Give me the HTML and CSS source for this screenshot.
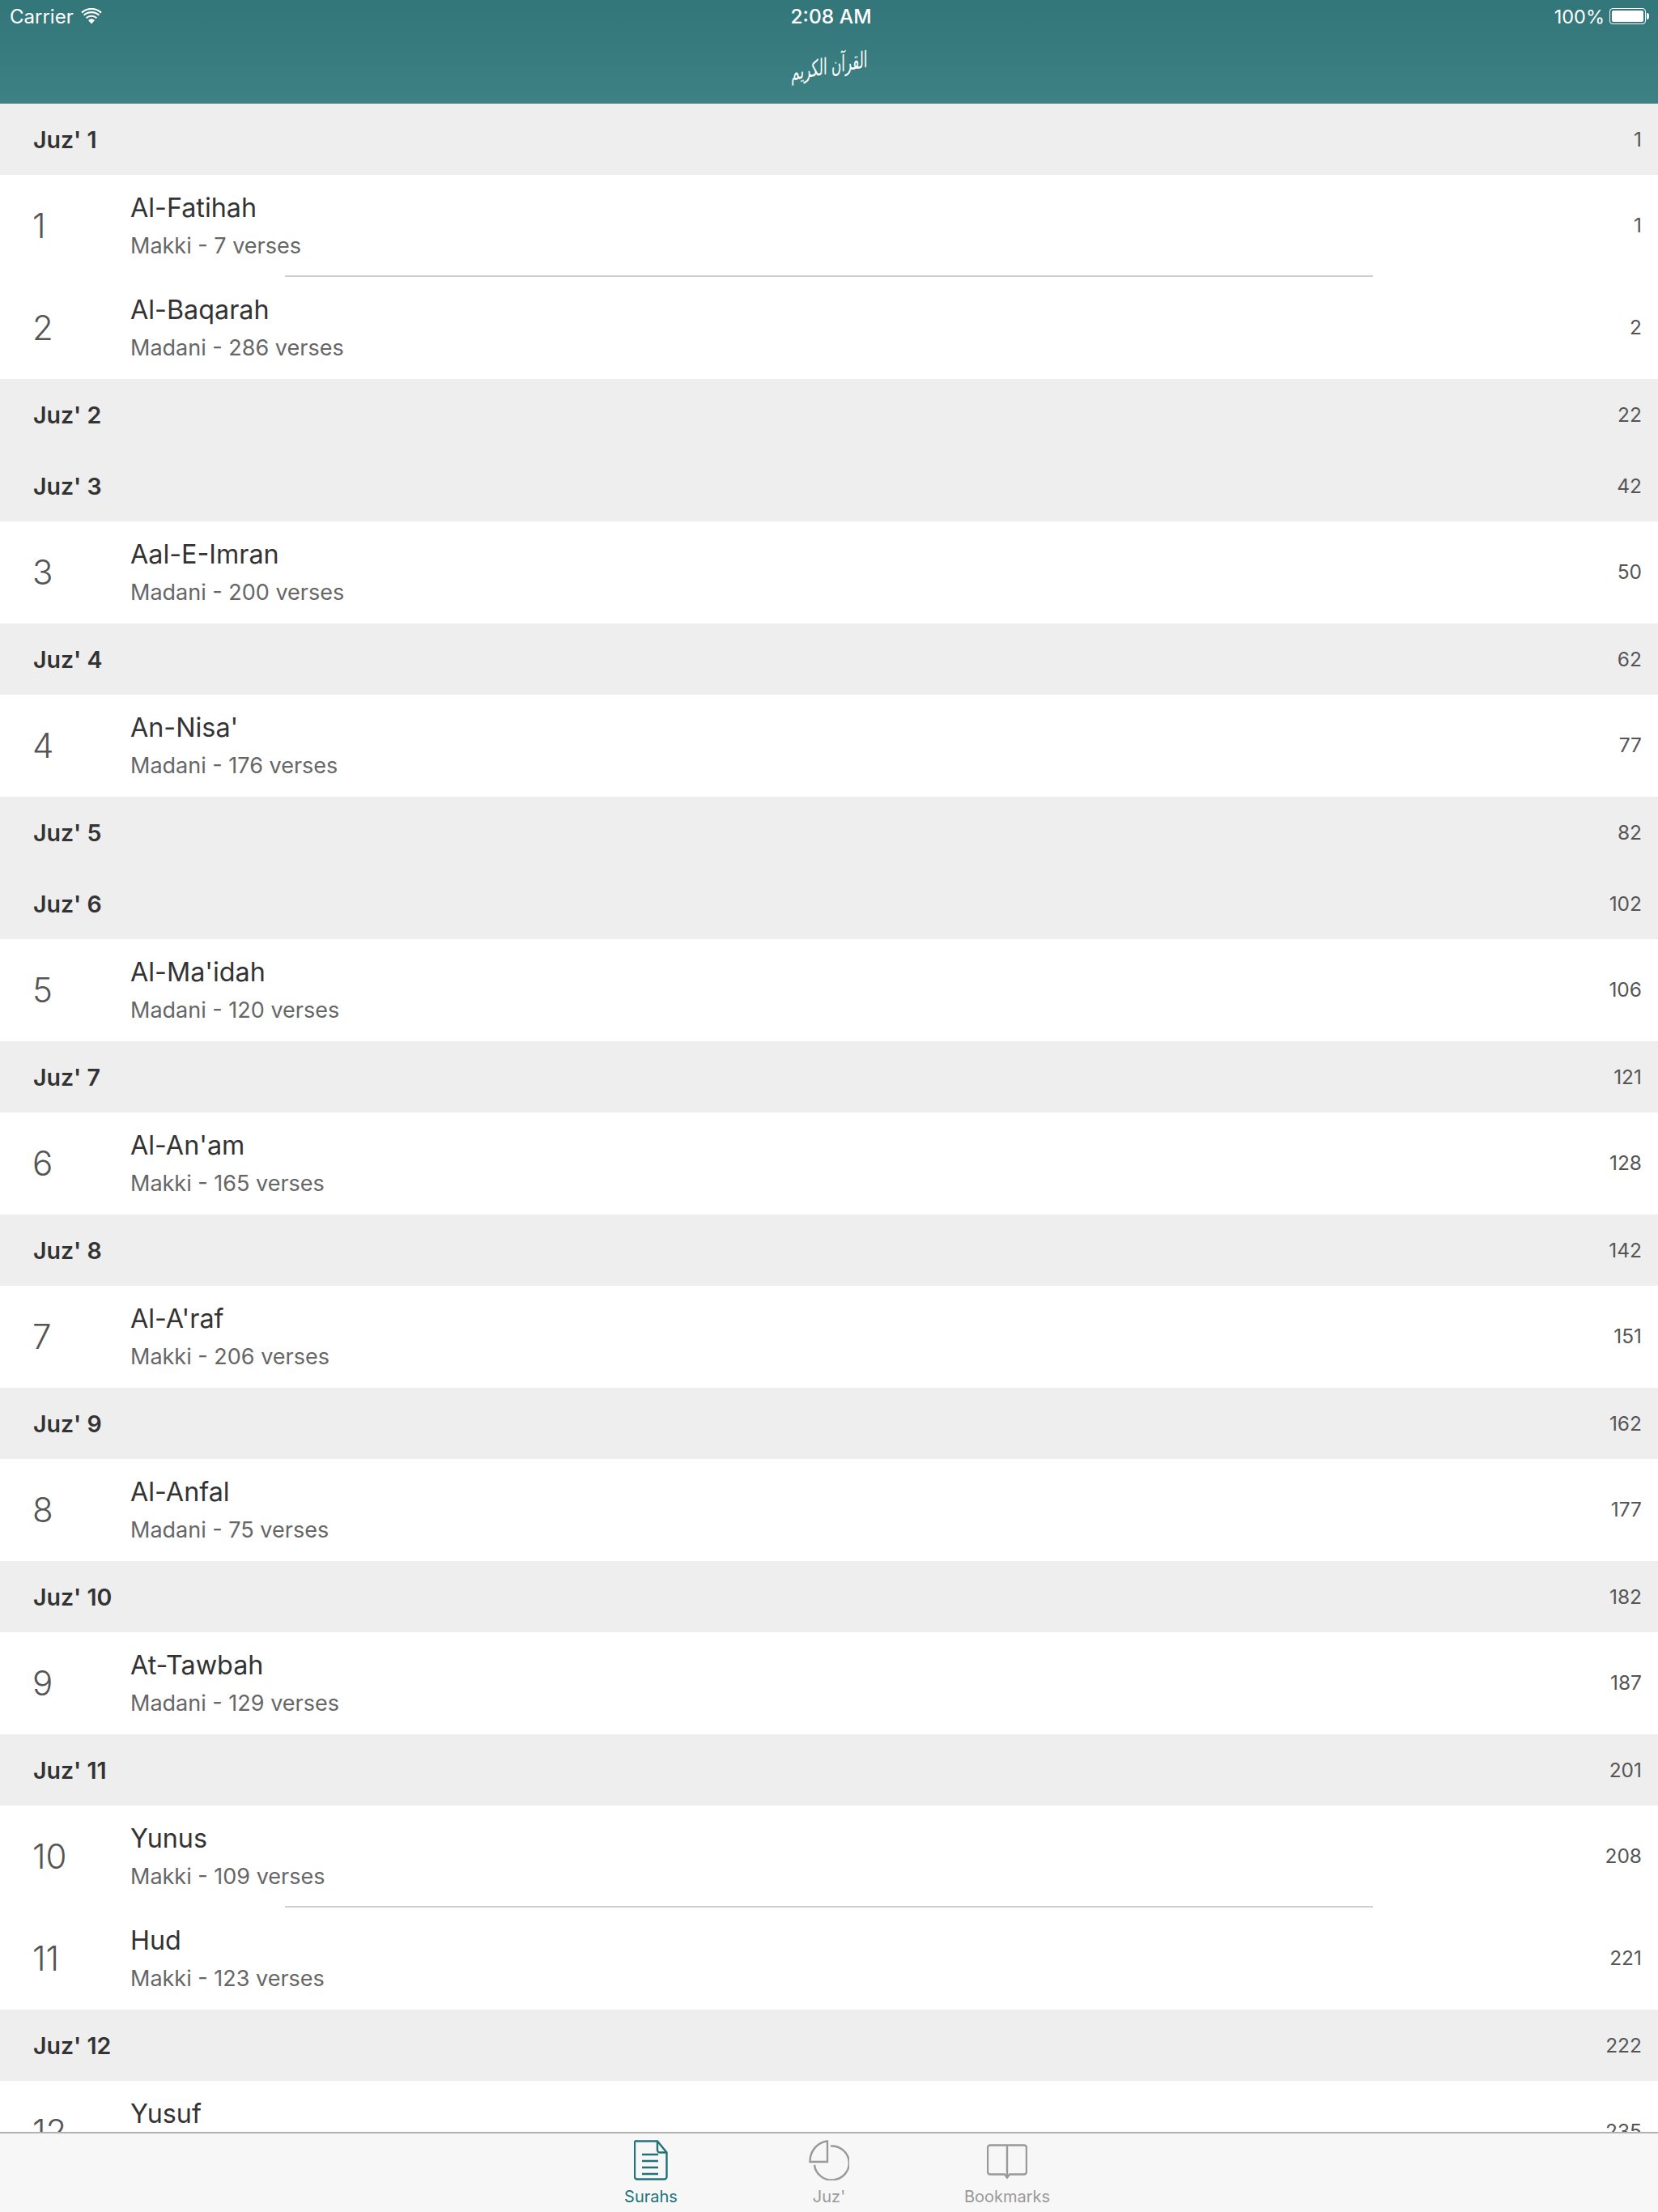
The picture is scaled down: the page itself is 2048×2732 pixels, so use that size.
FILE: index.html
```html
<!DOCTYPE html>
<html lang="en">
<head>
    <meta charset="UTF-8">
    <meta name="viewport" content="width=device-width, initial-scale=1.0">
    <title>Quran</title>
    <link rel="stylesheet" href="styles.css">
</head>
<body>
    <header class="nav">
        <div class="status">
            <div class="status-left">
                <span>Carrier</span>
                <svg class="wifi" viewBox="0 0 26 20" width="26" height="20">
                    <path d="M13 19.5l-4-4.6a6 6 0 0 1 8 0z" fill="#fff"/>
                    <path d="M6.6 12.2a9.6 9.6 0 0 1 12.8 0M3.6 8.7a14.2 14.2 0 0 1 18.8 0M1 5.6a18 18 0 0 1 24 0" fill="none" stroke="#fff" stroke-width="2.2"/>
                </svg>
            </div>
            <div class="status-time">2:08 AM</div>
            <div class="status-right">
                <span>100%</span>
                <div class="battery"><div class="battery-fill"></div></div>
                <div class="battery-nub"></div>
            </div>
        </div>
        <div class="nav-title" lang="ar" dir="rtl"><span>القرآن الكريم</span></div>
    </header>

    <main class="list">
        <div class="section"><b>Juz' 1</b><span>1</span></div>
        <div class="row"><div class="num">1</div><div class="info"><div class="name">Al-Fatihah</div><div class="sub">Makki - 7 verses</div></div><span class="page">1</span></div>
        <div class="row"><div class="num">2</div><div class="info"><div class="name">Al-Baqarah</div><div class="sub">Madani - 286 verses</div></div><span class="page">2</span></div>
        <div class="section"><b>Juz' 2</b><span>22</span></div>
        <div class="section"><b>Juz' 3</b><span>42</span></div>
        <div class="row"><div class="num">3</div><div class="info"><div class="name">Aal-E-Imran</div><div class="sub">Madani - 200 verses</div></div><span class="page">50</span></div>
        <div class="section"><b>Juz' 4</b><span>62</span></div>
        <div class="row"><div class="num">4</div><div class="info"><div class="name">An-Nisa'</div><div class="sub">Madani - 176 verses</div></div><span class="page">77</span></div>
        <div class="section"><b>Juz' 5</b><span>82</span></div>
        <div class="section"><b>Juz' 6</b><span>102</span></div>
        <div class="row"><div class="num">5</div><div class="info"><div class="name">Al-Ma'idah</div><div class="sub">Madani - 120 verses</div></div><span class="page">106</span></div>
        <div class="section"><b>Juz' 7</b><span>121</span></div>
        <div class="row"><div class="num">6</div><div class="info"><div class="name">Al-An'am</div><div class="sub">Makki - 165 verses</div></div><span class="page">128</span></div>
        <div class="section"><b>Juz' 8</b><span>142</span></div>
        <div class="row"><div class="num">7</div><div class="info"><div class="name">Al-A'raf</div><div class="sub">Makki - 206 verses</div></div><span class="page">151</span></div>
        <div class="section"><b>Juz' 9</b><span>162</span></div>
        <div class="row"><div class="num">8</div><div class="info"><div class="name">Al-Anfal</div><div class="sub">Madani - 75 verses</div></div><span class="page">177</span></div>
        <div class="section"><b>Juz' 10</b><span>182</span></div>
        <div class="row"><div class="num">9</div><div class="info"><div class="name">At-Tawbah</div><div class="sub">Madani - 129 verses</div></div><span class="page">187</span></div>
        <div class="section"><b>Juz' 11</b><span>201</span></div>
        <div class="row"><div class="num">10</div><div class="info"><div class="name">Yunus</div><div class="sub">Makki - 109 verses</div></div><span class="page">208</span></div>
        <div class="row"><div class="num">11</div><div class="info"><div class="name">Hud</div><div class="sub">Makki - 123 verses</div></div><span class="page">221</span></div>
        <div class="section"><b>Juz' 12</b><span>222</span></div>
        <div class="row"><div class="num">12</div><div class="info"><div class="name">Yusuf</div><div class="sub">Makki - 111 verses</div></div><span class="page">235</span></div>
    </main>

    <footer class="tabs">
        <div class="tab active">
            <svg viewBox="0 0 42 50" width="42" height="50" fill="none" stroke="#22727a" stroke-width="2.4">
                <path d="M4 1.500h25l11.500 14v30a3 3 0 0 1-3 3H4a3 3 0 0 1-3-3v-42a2 2 0 0 1 3-2z"/>
                <path d="M29 1.500v11a3 3 0 0 0 3 3h8.500"/>
                <path d="M10 18h20M10 26h20M10 34h20M10 42h20"/>
            </svg>
            <span>Surahs</span>
        </div>
        <div class="tab">
            <svg viewBox="0 0 50 50" width="50" height="50" fill="none" stroke="#999" stroke-width="2.4">
                <path d="M23 1.500V27H1.500A24 25 0 0 1 23 1.500z"/>
                <path d="M27 7.500A21.500 21 0 1 1 7 31"/>
            </svg>
            <span>Juz'</span>
        </div>
        <div class="tab">
            <svg viewBox="0 0 50 50" width="50" height="50" fill="none" stroke="#999" stroke-width="2.4">
                <path d="M25 6.500H4a3 3 0 0 0-3 3v30a3 3 0 0 0 3 3h18l3 4 3-4h18a3 3 0 0 0 3-3v-30a3 3 0 0 0-3-3z"/>
                <path d="M25 6.500V46"/>
            </svg>
            <span>Bookmarks</span>
        </div>
    </footer>
</body>
</html>
```

FILE: styles.css
```css
* {
    box-sizing: border-box;
}
body {
    margin: 0;
    height: 2732px;
    overflow: hidden;
    display: flex;
    flex-direction: column;
    font-family: 'Inter', 'Liberation Sans', sans-serif;
    color: #333;
    background-color: white;
}
.nav {
    height: 128px;
    flex: none;
    color: white;
    background: linear-gradient(#33767a, #3d8185);
}
.status {
    height: 40px;
    padding: 0 11px 0 12px;
    display: flex;
    align-items: center;
    justify-content: space-between;
    font-size: 24px;
}
.status-left, .status-right {
    width: 300px;
    display: flex;
    align-items: center;
}
.status-left {
    gap: 9px;
}
.status-right {
    justify-content: flex-end;
    font-size: 23.5px;
}
.status-time {
    margin-left: 4px;
    font-size: 24.5px;
    font-weight: 500;
}
.battery {
    width: 45px;
    height: 20px;
    margin-left: 6px;
    padding: 2px;
    border: 1.500px solid white;
    border-radius: 4px;
}
.battery-fill {
    height: 100%;
    background-color: white;
    border-radius: 2px;
}
.battery-nub {
    width: 3px;
    height: 8px;
    margin-left: 1px;
    background-color: white;
    border-radius: 0 3px 3px 0;
}
.nav-title {
    height: 88px;
    padding-bottom: 4px;
    display: flex;
    align-items: center;
    justify-content: center;
    font-family: 'DejaVu Sans', sans-serif;
    font-size: 28px;
    line-height: 1;
}
.nav-title span {
    display: block;
    transform: scaleX(0.6) skewY(-6deg);
}
.list {
    flex: 1;
    overflow: hidden;
}
.section {
    height: 88px;
    padding: 0 20px 0 41px;
    display: flex;
    align-items: center;
    justify-content: space-between;
    background-color: #eee;
    font-size: 28.500px;
}
.section b {
    font-weight: 600;
}
.section span, .page {
    font-size: 24.500px;
    color: #555;
}
.row {
    position: relative;
    height: 126px;
    padding: 0 20px 2px 40px;
    display: flex;
    align-items: center;
    justify-content: space-between;
    background-color: white;
}
.row + .row::before {
    content: "";
    position: absolute;
    top: -2px;
    left: 352px;
    right: 352px;
    height: 2px;
    background-color: #d0d0d3;
}
.num {
    width: 121px;
    font-size: 42px;
    font-weight: 300;
    color: #555;
}
.info {
    flex: 1;
    margin-top: 3px;
}
.name {
    font-size: 32.300px;
    line-height: 40px;
    margin-bottom: 9px;
}
.sub {
    font-size: 27px;
    line-height: 36px;
    color: #666;
}
.tabs {
    height: 99px;
    flex: none;
    display: flex;
    justify-content: center;
    background-color: #f7f7f7;
    border-top: 2px solid #b2b2b2;
}
.tab {
    width: 220px;
    padding-top: 8px;
    display: flex;
    flex-direction: column;
    align-items: center;
    font-size: 20px;
    color: #999;
}
.tab.active {
    color: #22727a;
}
.tab span {
    margin-top: 8px;
}
```
